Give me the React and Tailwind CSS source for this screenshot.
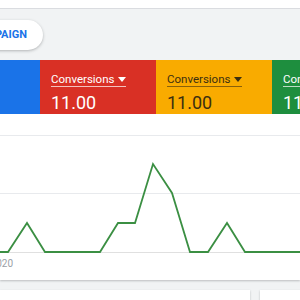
import React from 'react';

const cards = [
    { label: 'Clicks', value: '40', bg: 'bg-[#1a73e8]', text: 'text-white', line: 'border-white/70' },
    { label: 'Conversions', value: '11.00', bg: 'bg-[#d93025]', text: 'text-white', line: 'border-white/70' },
    { label: 'Conversions', value: '11.00', bg: 'bg-[#f9ab00]', text: 'text-[#3c2f10]', line: 'border-[#3c2f10]/60' },
    { label: 'Conversions', value: '11.00', bg: 'bg-[#1e8e3e]', text: 'text-white', line: 'border-white/70' },
];

const points = '0,138 8,138 27,109 45,138 100,138 118,109 135,109 153,50 172,79 190,138 208,138 227,109 245,138 300,138';

const StatCard = ({ card }) => (
    <div className={`w-[116px] h-[54px] shrink-0 pl-[11px] pt-[12px] flex flex-col items-start overflow-hidden ${card.bg} ${card.text}`}>
        <div className={`h-[15px] flex items-center gap-[4px] border-b ${card.line} text-[11.5px] leading-[13px]`}>
            {card.label}
            <svg width="8" height="5" viewBox="0 0 8 5"><path d="M0 0h8L4 5z" fill="currentColor" /></svg>
        </div>
        <div className="h-[20px] mt-[6px] text-[18px] leading-[20px]">{card.value}</div>
    </div>
);

export default function App() {
    return (
        <div className="w-[300px] h-[300px] overflow-hidden bg-[#f1f3f4] font-['Roboto',sans-serif]">
            <div className="h-[9px] bg-white border-b border-[#dadce0]" />

            <div className="h-[51px] pt-[11px]">
                <div className="w-[43px] flex justify-end">
                    <button className="shrink-0 h-[30px] pl-[24px] pr-[16px] rounded-full bg-white shadow-[0_1px_3px_rgba(60,64,67,0.35)] text-[#1a73e8] font-bold text-[11px]">
                        NEW CAMPAIGN
                    </button>
                </div>
            </div>

            <div className="flex ml-[-76px]">
                {cards.map((c, i) => <StatCard key={i} card={c} />)}
            </div>

            <div className="bg-white h-[166px] shadow-[0_1px_2px_rgba(60,64,67,0.3)]">
                <svg width="300" height="166" viewBox="0 0 300 166">
                    <line x1="0" y1="21.5" x2="300" y2="21.5" stroke="#e8eaed" />
                    <line x1="0" y1="79.5" x2="300" y2="79.5" stroke="#e8eaed" />
                    <line x1="0" y1="138.5" x2="300" y2="138.5" stroke="#e0e0e0" />
                    <polyline points={points} fill="none" stroke="#3b8f43" strokeWidth="1.8" strokeLinejoin="miter" />
                    <text x="13" y="153" textAnchor="end" fontSize="10" fill="#9aa0a6" fontFamily="Roboto, sans-serif">2020</text>
                </svg>
            </div>

            <div className="flex gap-[10px] mt-[10px]">
                <div className="w-[250px] h-[20px] shrink-0 bg-white shadow-[0_1px_2px_rgba(60,64,67,0.3)]" />
                <div className="w-[60px] h-[20px] shrink-0 bg-white shadow-[0_1px_2px_rgba(60,64,67,0.3)]" />
            </div>
        </div>
    );
}
